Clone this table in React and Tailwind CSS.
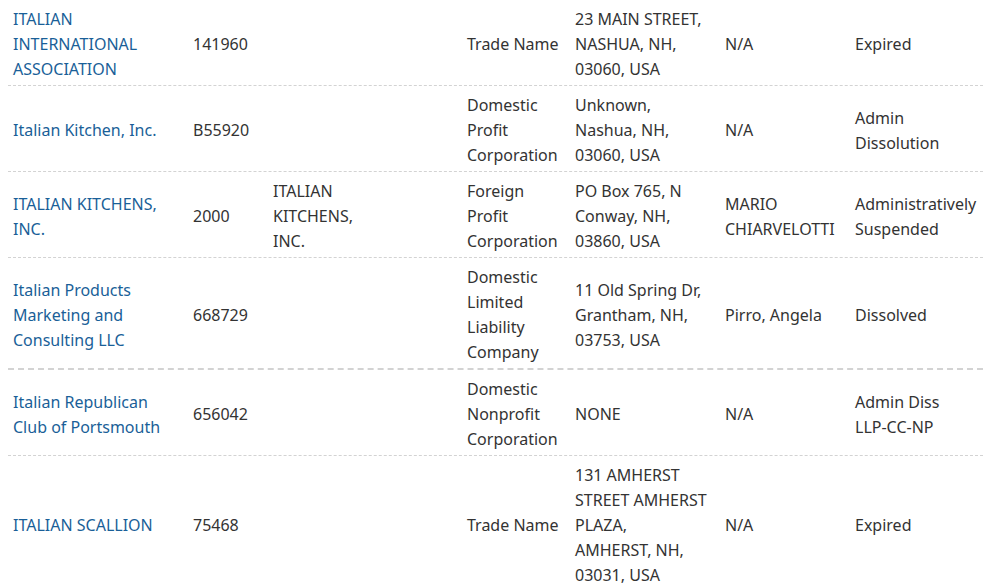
import React from 'react';

const rows = [
  {
    name: ['ITALIAN', 'INTERNATIONAL', 'ASSOCIATION'],
    id: '141960',
    other: [],
    type: ['Trade Name'],
    address: ['23 MAIN STREET,', 'NASHUA, NH,', '03060, USA'],
    agent: ['N/A'],
    status: ['Expired'],
  },
  {
    name: ['Italian Kitchen, Inc.'],
    id: 'B55920',
    other: [],
    type: ['Domestic', 'Profit', 'Corporation'],
    address: ['Unknown,', 'Nashua, NH,', '03060, USA'],
    agent: ['N/A'],
    status: ['Admin', 'Dissolution'],
  },
  {
    name: ['ITALIAN KITCHENS,', 'INC.'],
    id: '2000',
    other: ['ITALIAN', 'KITCHENS,', 'INC.'],
    type: ['Foreign', 'Profit', 'Corporation'],
    address: ['PO Box 765, N', 'Conway, NH,', '03860, USA'],
    agent: ['MARIO', 'CHIARVELOTTI'],
    status: ['Administratively', 'Suspended'],
  },
  {
    name: ['Italian Products', 'Marketing and', 'Consulting LLC'],
    id: '668729',
    other: [],
    type: ['Domestic', 'Limited', 'Liability', 'Company'],
    address: ['11 Old Spring Dr,', 'Grantham, NH,', '03753, USA'],
    agent: ['Pirro, Angela'],
    status: ['Dissolved'],
    thick: true,
  },
  {
    name: ['Italian Republican', 'Club of Portsmouth'],
    id: '656042',
    other: [],
    type: ['Domestic', 'Nonprofit', 'Corporation'],
    address: ['NONE'],
    agent: ['N/A'],
    status: ['Admin Diss', 'LLP-CC-NP'],
  },
  {
    name: ['ITALIAN SCALLION'],
    id: '75468',
    other: [],
    type: ['Trade Name'],
    address: ['131 AMHERST', 'STREET AMHERST', 'PLAZA,', 'AMHERST, NH,', '03031, USA'],
    agent: ['N/A'],
    status: ['Expired'],
  },
];

function Lines({ lines }) {
  return lines.map((l, i) => (
    <div key={i} className="whitespace-nowrap">{l}</div>
  ));
}

export default function App() {
  return (
    <div
      className="w-[987px] h-[587px] overflow-hidden bg-white pl-2 text-[16px] leading-[25px] text-[#333]"
      style={{ fontFamily: '"Noto Sans", "Open Sans", sans-serif' }}
    >
      {rows.map((r, i) => (
        <div
          key={i}
          className={
            'grid w-[975px] grid-cols-[180px_80px_194px_108px_150px_130px_133px] items-center pt-[7px] pb-[3px] border-[#d3d3d3] ' +
            (r.thick ? 'border-b-2 border-dashed' : 'border-b border-dashed')
          }
        >
          <div className="pl-[5px] text-[#1a5f98]">
            <Lines lines={r.name} />
          </div>
          <div className="pl-[5px]">{r.id}</div>
          <div className="pl-[5px]">
            <Lines lines={r.other} />
          </div>
          <div className="pl-[5px]">
            <Lines lines={r.type} />
          </div>
          <div className="pl-[5px]">
            <Lines lines={r.address} />
          </div>
          <div className="pl-[5px]">
            <Lines lines={r.agent} />
          </div>
          <div className="pl-[5px]">
            <Lines lines={r.status} />
          </div>
        </div>
      ))}
    </div>
  );
}
